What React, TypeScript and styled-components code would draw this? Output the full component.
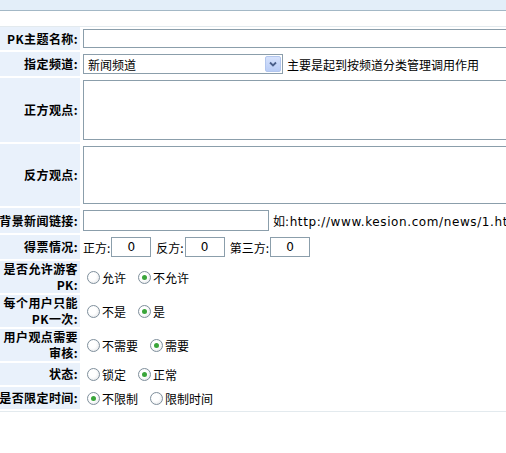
import React from "react";
import styled, { createGlobalStyle } from "styled-components";

const GlobalStyle = createGlobalStyle`
  html, body {
    margin: 0;
    padding: 0;
    background: #ffffff;
    overflow: hidden;
  }
  body {
    font-family: "DejaVu Sans", "Noto Sans CJK SC", sans-serif;
    font-size: 12px;
    color: #000;
  }
`;

const Page = styled.div`
  width: 640px;
`;

const TopBar = styled.div`
  height: 10px;
  background: #e3eef9;
  border-bottom: 1px solid #a3b8c6;
`;

const Spacer = styled.div`
  height: 15px;
  border-bottom: 1px solid #e3eaee;
`;

const FormGrid = styled.div`
  display: grid;
  grid-template-columns: 80px 1fr;
  column-gap: 1px;
  row-gap: 2px;
  padding-bottom: 2px;
  border-bottom: 1px solid #e3eaee;
`;

const Label = styled.div<{ $wrap?: boolean }>`
  background: #e9f1fb;
  font-family: "Noto Sans CJK SC", sans-serif;
  font-weight: 700;
  font-size: 12px;
  line-height: 16px;
  letter-spacing: 0.4px;
  display: flex;
  align-items: center;
  justify-content: flex-end;
  text-align: right;
  padding-right: 2px;
  white-space: ${(p) => (p.$wrap ? "normal" : "nowrap")};
  overflow: visible;
`;

const Value = styled.div`
  display: flex;
  align-items: center;
  padding: 2px 0 2px 2px;
  min-height: 18px;
  white-space: nowrap;
`;

const TextInput = styled.input<{ $w: number }>`
  box-sizing: border-box;
  width: ${(p) => p.$w}px;
  height: ${(p) => (p.$w > 300 ? 19 : 21)}px;
  border: 1px solid #8b9eab;
  padding: 0 3px;
  font: inherit;
  margin: 0;
`;

const NumInput = styled.input`
  box-sizing: border-box;
  width: 40px;
  height: 20px;
  border: 1px solid #8b9eab;
  text-align: center;
  font: inherit;
  margin: 0 5px 0 1px;
`;

const Area = styled.textarea<{ $h: number }>`
  box-sizing: border-box;
  width: 480px;
  height: ${(p) => p.$h}px;
  border: 1px solid #8b9eab;
  resize: none;
  margin: 0;
  font: inherit;
`;

const SelectBox = styled.div`
  box-sizing: border-box;
  width: 200px;
  height: 20px;
  border: 1px solid #8b9eab;
  display: flex;
  align-items: center;
  justify-content: space-between;
  padding: 0 1px 0 4px;
  font-family: "Noto Sans CJK SC", sans-serif;
  font-size: 12px;
`;

const DropButton = styled.span`
  box-sizing: border-box;
  width: 16px;
  height: 16px;
  border: 1px solid #b2c6ee;
  border-radius: 2px;
  background: linear-gradient(#d6e2fc, #b9cdf6);
  display: flex;
  align-items: center;
  justify-content: center;
`;

const Hint = styled.span`
  margin-left: 4px;
  font-family: "Noto Sans CJK SC", sans-serif;
`;

const Url = styled.span`
  font-family: "DejaVu Sans", sans-serif;
  letter-spacing: 0.6px;
`;

const Small = styled.span`
  font-family: "Noto Sans CJK SC", sans-serif;
`;

const Option = styled.label`
  display: inline-flex;
  align-items: center;
  margin-right: 8px;
  font-family: "Noto Sans CJK SC", sans-serif;
`;

const Circle = styled.span<{ $on?: boolean }>`
  box-sizing: border-box;
  width: 13px;
  height: 13px;
  border-radius: 50%;
  border: 1px solid #7f8f9c;
  background: radial-gradient(circle at 40% 40%, #ffffff 40%, #dcdfe2 100%);
  margin: 0 2px 0 4px;
  display: inline-flex;
  align-items: center;
  justify-content: center;

  &::after {
    content: "";
    width: 5px;
    height: 5px;
    border-radius: 50%;
    background: ${(p) => (p.$on ? "#3aa53a" : "transparent")};
  }
`;

const Radio = ({ text, on }: { text: string; on?: boolean }) => (
  <Option>
    <Circle $on={on} />
    {text}
  </Option>
);

const Chevron = () => (
  <svg width="8" height="6" viewBox="0 0 8 6">
    <path d="M1 1.5 L4 4.5 L7 1.5" stroke="#4a5f8a" strokeWidth="1.8" fill="none" />
  </svg>
);

export default function App() {
  return (
    <Page>
      <GlobalStyle />
      <TopBar />
      <Spacer />
      <FormGrid>
        <Label>PK主题名称:</Label>
        <Value>
          <TextInput $w={480} />
        </Value>

        <Label>指定频道:</Label>
        <Value>
          <SelectBox>
            新闻频道
            <DropButton>
              <Chevron />
            </DropButton>
          </SelectBox>
          <Hint>主要是起到按频道分类管理调用作用</Hint>
        </Value>

        <Label>正方观点:</Label>
        <Value>
          <Area $h={60} />
        </Value>

        <Label>反方观点:</Label>
        <Value>
          <Area $h={58} />
        </Value>

        <Label>背景新闻链接:</Label>
        <Value>
          <TextInput $w={186} />
          <Hint>
            如<Url>:http://www.kesion.com/news/1.html</Url>
          </Hint>
        </Value>

        <Label>得票情况:</Label>
        <Value>
          <Small>正方:</Small>
          <NumInput defaultValue="0" />
          <Small>反方:</Small>
          <NumInput defaultValue="0" />
          <Small>第三方:</Small>
          <NumInput defaultValue="0" />
        </Value>

        <Label $wrap>是否允许游客PK:</Label>
        <Value>
          <Radio text="允许" />
          <Radio text="不允许" on />
        </Value>

        <Label $wrap>每个用户只能PK一次:</Label>
        <Value>
          <Radio text="不是" />
          <Radio text="是" on />
        </Value>

        <Label $wrap>用户观点需要审核:</Label>
        <Value>
          <Radio text="不需要" />
          <Radio text="需要" on />
        </Value>

        <Label>状态:</Label>
        <Value>
          <Radio text="锁定" />
          <Radio text="正常" on />
        </Value>

        <Label>是否限定时间:</Label>
        <Value>
          <Radio text="不限制" on />
          <Radio text="限制时间" />
        </Value>
      </FormGrid>
    </Page>
  );
}
